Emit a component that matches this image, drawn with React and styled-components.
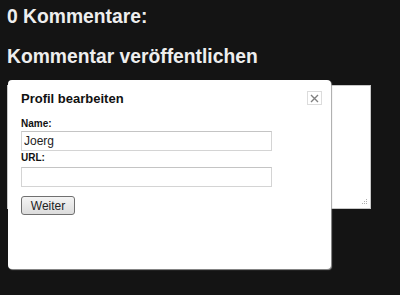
import React from 'react';
import styled, { createGlobalStyle } from 'styled-components';

const Global = createGlobalStyle`
  body {
    margin: 0;
    background: #141414;
    font-family: "Liberation Sans", Arial, sans-serif;
  }
`

const Page = styled.div`
  position: relative;
  padding: 6px 7px 0 7px;
  height: 295px;
  box-sizing: border-box;
`

const Title = styled.h2`
  margin: 0 0 ${props => props.gap}px 0;
  font-size: 19.3px;
  line-height: 22px;
  font-weight: bold;
  color: #eeeeee;
`

const CommentBox = styled.div`
  position: relative;
  width: 364px;
  height: 124px;
`

const TextArea = styled.textarea`
  display: block;
  width: 100%;
  height: 100%;
  box-sizing: border-box;
  border: 1px solid #c8c8c8;
  background: #fff;
  resize: none;
  margin: 0;
`

const Grip = styled.svg`
  position: absolute;
  right: 3px;
  bottom: 3px;
`

const Dialog = styled.div`
  position: absolute;
  left: 8px;
  top: 80px;
  width: 323px;
  height: 189px;
  box-sizing: border-box;
  padding: 11px 13px;
  background: #fff;
  border-radius: 4px;
  box-shadow: 1px 1px 1px rgba(160, 160, 160, 0.9);
`

const DialogTitle = styled.div`
  font-size: 13px;
  line-height: 15px;
  font-weight: bold;
  color: #111;
`

const Close = styled.button`
  position: absolute;
  top: 11px;
  right: 9px;
  width: 15px;
  height: 14px;
  padding: 0;
  border: 1px solid #dcdcdc;
  background: #fff;
  display: flex;
  align-items: center;
  justify-content: center;
`

const Label = styled.label`
  display: block;
  margin: ${props => props.top}px 0 ${props => props.bottom}px 0;
  font-size: 10px;
  line-height: 12px;
  font-weight: bold;
  color: #111;
`

const Input = styled.input`
  display: block;
  width: 251px;
  height: 20px;
  box-sizing: border-box;
  margin: 0;
  padding: 0 2px;
  border: 1px solid #d4d4d4;
  border-top-color: #c4c4c4;
  font-family: "Liberation Sans", Arial, sans-serif;
  font-size: 12px;
  color: #222;
  outline: none;
`

const Button = styled.button`
  display: block;
  margin-top: 9px;
  width: 54px;
  height: 19px;
  padding: 0;
  border: 1px solid #707070;
  border-radius: 3px;
  background: linear-gradient(#f4f4f4, #dcdcdc);
  font-family: "Liberation Sans", Arial, sans-serif;
  font-size: 12px;
  color: #222;
`

export default function App() {
  return (
    <Page>
      <Global />
      <Title gap={18}>0 Kommentare:</Title>
      <Title gap={17}>Kommentar veröffentlichen</Title>
      <CommentBox>
        <TextArea />
        <Grip width="7" height="7" viewBox="0 0 7 7">
          <g fill="#b0b0b0">
            <rect x="5" y="0" width="1" height="1" />
            <rect x="5" y="2" width="1" height="1" />
            <rect x="3" y="2" width="1" height="1" />
            <rect x="5" y="4" width="1" height="1" />
            <rect x="3" y="4" width="1" height="1" />
            <rect x="1" y="4" width="1" height="1" />
          </g>
        </Grip>
      </CommentBox>
      <Dialog>
        <DialogTitle>Profil bearbeiten</DialogTitle>
        <Close aria-label="Schließen">
          <svg width="9" height="9" viewBox="0 0 9 9">
            <path d="M1 1L8 8M8 1L1 8" stroke="#808080" strokeWidth="1.4" />
          </svg>
        </Close>
        <Label top={12} bottom={1}>Name:</Label>
        <Input defaultValue="Joerg" />
        <Label top={1} bottom={3}>URL:</Label>
        <Input />
        <Button>Weiter</Button>
      </Dialog>
    </Page>
  );
}
